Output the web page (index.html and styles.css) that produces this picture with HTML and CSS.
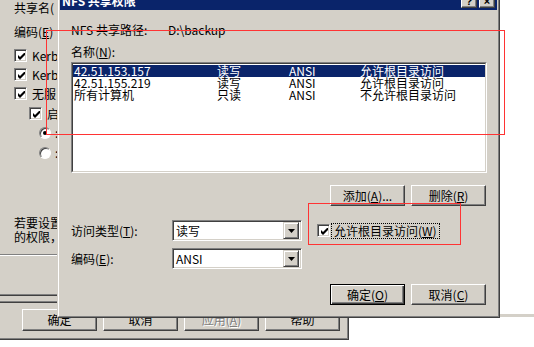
FILE: index.html
```html
<!DOCTYPE html>
<html lang="zh-CN">
<head>
<meta charset="utf-8">
<title>NFS 共享权限</title>
<link rel="stylesheet" href="styles.css">
</head>
<body>
<div class="desk">
  <div class="win back">
    <div class="frame">
      <div class="back-body">
        <div class="b-text">共享名(</div>
        <div class="b-text b-enc">编码(<u>E</u>)</div>
        <div class="b-chk"><span class="chk"><svg viewBox="0 0 7 7" width="7" height="7"><polygon points="0,2 2,4 7,-1 7,2 2,7 0,5" fill="#000"/></svg></span><span>Kerb</span></div>
        <div class="b-chk"><span class="chk"><svg viewBox="0 0 7 7" width="7" height="7"><polygon points="0,2 2,4 7,-1 7,2 2,7 0,5" fill="#000"/></svg></span><span>Kerb</span></div>
        <div class="b-chk"><span class="chk"><svg viewBox="0 0 7 7" width="7" height="7"><polygon points="0,2 2,4 7,-1 7,2 2,7 0,5" fill="#000"/></svg></span><span>无服</span></div>
        <div class="b-chk b-sub"><span class="chk"><svg viewBox="0 0 7 7" width="7" height="7"><polygon points="0,2 2,4 7,-1 7,2 2,7 0,5" fill="#000"/></svg></span><span>启</span></div>
        <div class="b-radio b-r1"><span class="radio on"></span><span>:</span></div>
        <div class="b-radio"><span class="radio"></span><span>:</span></div>
        <div class="b-note">若要设置<br>的权限，</div>
        <div class="b-etch"></div>
        <div class="b-tabline"></div>
        <div class="b-tabline second"></div>
        <div class="b-btns">
          <span class="btn">确定</span>
          <span class="btn">取消</span>
          <span class="btn disabled">应用(<u>A</u>)</span>
          <span class="btn">帮助</span>
        </div>
      </div>
    </div>
  </div>

  <div class="win front">
    <div class="frame">
      <div class="titlebar">
        <span class="title">NFS 共享权限</span>
        <span class="tbtns"><span class="tbtn">?</span><span class="tbtn">×</span></span>
      </div>
      <div class="body">
        <div class="path-row"><span class="path-lbl">NFS 共享路径:</span><span>D:\backup</span></div>
        <div class="name-lbl">名称(<u>N</u>):</div>
        <div class="list">
          <div class="list-in">
            <div class="row sel"><span>42.51.153.157</span><span>读写</span><span>ANSI</span><span>允许根目录访问</span></div>
            <div class="row"><span>42.51.155.219</span><span>读写</span><span>ANSI</span><span>允许根目录访问</span></div>
            <div class="row"><span>所有计算机</span><span>只读</span><span>ANSI</span><span>不允许根目录访问</span></div>
          </div>
        </div>
        <div class="btn-row">
          <span class="btn">添加(<u>A</u>)...</span>
          <span class="btn">删除(<u>R</u>)</span>
        </div>
        <div class="opts">
          <span class="opt-lbl">访问类型(<u>T</u>):</span>
          <span class="combo"><span class="combo-val">读写</span><span class="combo-btn"><svg viewBox="0 0 7 4" width="7" height="4"><polygon points="0,0 7,0 3.5,4" fill="#000"/></svg></span></span>
          <span></span>
          <span class="opt-chk"><span class="chk"><svg viewBox="0 0 7 7" width="7" height="7"><polygon points="0,2 2,4 7,-1 7,2 2,7 0,5" fill="#000"/></svg></span><span class="focus">允许根目录访问(<u>W</u>)</span></span>
          <span class="opt-lbl">编码(<u>E</u>):</span>
          <span class="combo"><span class="combo-val">ANSI</span><span class="combo-btn"><svg viewBox="0 0 7 4" width="7" height="4"><polygon points="0,0 7,0 3.5,4" fill="#000"/></svg></span></span>
        </div>
        <div class="btn-row foot">
          <span class="btn default">确定(<u>O</u>)</span>
          <span class="btn">取消(<u>C</u>)</span>
        </div>
      </div>
    </div>
  </div>

  <div class="anno a1"></div>
  <div class="anno a2"></div>
  <div class="edge"></div>
</div>
</body>
</html>
```

FILE: styles.css
```css
* { box-sizing: border-box; }
html, body { margin: 0; padding: 0; }
body {
  width: 534px;
  height: 347px;
  overflow: hidden;
  background: #fff;
  font-family: "Noto Sans CJK SC", "Liberation Sans", sans-serif;
  font-size: 12px;
  line-height: 12px;
  color: #000;
}
u { text-decoration: underline; text-underline-offset: 1px; }
.desk { position: relative; width: 534px; height: 347px; overflow: hidden; }

.win {
  position: absolute;
  background: #d4d0c8;
  border: 1px solid;
  border-color: #d4d0c8 #404040 #404040 #d4d0c8;
}
.frame {
  height: 100%;
  border: 1px solid;
  border-color: #fff #808080 #808080 #fff;
  padding: 1px;
  display: flex;
  flex-direction: column;
}

/* ---------- back dialog ---------- */
.back { left: -20px; top: -2px; width: 369px; height: 342px; }
.back-body { padding: 1px 0 0 31px; display: flex; flex-direction: column; white-space: nowrap; }
.b-text { height: 12px; }
.b-enc { margin-top: 12px; }
.b-chk { display: flex; align-items: center; gap: 5px; height: 13px; margin-top: 6px; }
.b-enc + .b-chk { margin-top: 11px; }
.b-sub { margin-left: 15px; margin-top: 7px; }
.b-radio { display: flex; align-items: center; gap: 4px; height: 12px; margin-left: 25px; margin-top: 8px; }
.b-r1 { margin-top: 7px; }
.b-note { margin-top: 57px; line-height: 14px; }
.b-etch { margin: 10px 0 0 -31px; height: 2px; border-top: 1px solid #808080; border-bottom: 1px solid #fff; }
.b-tabline { margin: 38px 0 0 -31px; height: 2px; border-top: 1px solid #808080; border-bottom: 1px solid #404040; }
.b-tabline.second { margin-top: 5px; }
.b-btns { display: flex; gap: 6px; margin: 6px 0 0 8px; }
.b-btns .btn { height: 22px; }

/* ---------- controls ---------- */
.chk {
  width: 13px; height: 13px; flex: none;
  border: 1px solid; border-color: #808080 #fff #fff #808080;
  box-shadow: inset 1px 1px #404040, inset -1px -1px #d4d0c8;
  background: #fff;
  display: flex; align-items: center; justify-content: center;
  padding: 1px 0 0 1px;
}
.chk svg { display: block; }
.radio {
  width: 12px; height: 12px; flex: none; border-radius: 50%;
  border: 1px solid; border-color: #808080 #fff #fff #808080;
  box-shadow: inset 1px 1px #404040;
  background: #fff;
  display: flex; align-items: center; justify-content: center;
}
.radio.on::after { content: ""; width: 4px; height: 4px; border-radius: 50%; background: #000; }

.btn {
  width: 75px; height: 21px; flex: none;
  background: #d4d0c8;
  border: 1px solid; border-color: #fff #404040 #404040 #fff;
  box-shadow: inset -1px -1px #808080;
  display: flex; align-items: center; justify-content: center;
  white-space: nowrap;
}
.btn.default {
  border-color: #000;
  box-shadow: inset 1px 1px #fff, inset -1px -1px #404040, inset -2px -2px #808080;
}
.btn.disabled { color: #808080; text-shadow: 1px 1px #fff; }

/* ---------- front dialog ---------- */
.front { left: 57px; top: -11px; width: 443px; height: 329px; }
.titlebar {
  height: 18px; flex: none;
  background: #0a246a; color: #fff; font-weight: bold;
  display: flex; align-items: center; justify-content: space-between;
  padding: 0 2px;
}
.tbtns { display: flex; gap: 2px; }
.tbtn {
  width: 16px; height: 14px;
  background: #d4d0c8; color: #000;
  border: 1px solid; border-color: #fff #404040 #404040 #fff;
  box-shadow: inset -1px -1px #808080;
  display: flex; align-items: center; justify-content: center;
  font-family: "Liberation Sans", sans-serif; font-size: 11px; font-weight: bold;
}
.body { padding: 14px 10px 0 11px; display: flex; flex-direction: column; }
.path-row { display: flex; height: 12px; }
.path-lbl { width: 97px; }
.name-lbl { margin-top: 10px; height: 12px; }
.list {
  margin-top: 4px; height: 111px;
  border: 1px solid; border-color: #808080 #fff #fff #808080;
}
.list-in {
  height: 100%; background: #fff; padding-top: 1px;
  border: 1px solid; border-color: #404040 #d4d0c8 #d4d0c8 #404040;
}
.row {
  display: grid; grid-template-columns: 143px 72px 71px 1fr;
  height: 12px; padding-left: 1px; white-space: nowrap;
}
.row.sel { background: #0a246a; color: #fff; }
.btn-row { display: flex; justify-content: flex-end; gap: 6px; margin-top: 12px; padding-right: 1px; }
.opts {
  margin-top: 14px;
  display: grid; grid-template-columns: 101px 130px 15px auto;
  grid-auto-rows: 21px; row-gap: 7px; align-items: center;
}
.combo {
  height: 21px; display: flex; align-items: center; justify-content: space-between;
  background: #fff;
  border: 1px solid; border-color: #808080 #fff #fff #808080;
  box-shadow: inset 1px 1px #404040, inset -1px -1px #d4d0c8;
  padding: 2px 2px 2px 3px;
}
.combo-btn {
  width: 16px; height: 17px;
  background: #d4d0c8;
  border: 1px solid; border-color: #d4d0c8 #404040 #404040 #d4d0c8;
  box-shadow: inset 1px 1px #fff, inset -1px -1px #808080;
  display: flex; align-items: center; justify-content: center;
}
.combo-btn svg { display: block; }
.opt-chk { display: flex; align-items: center; gap: 3px; white-space: nowrap; }
.focus { outline: 1px dotted #000; outline-offset: 1px; padding: 0 1px; }
.foot { margin-top: 15px; }

/* ---------- overlays ---------- */
.anno { position: absolute; border: 1px solid #f33; }
.a1 { left: 46px; top: 30px; width: 459px; height: 105px; }
.a2 { left: 308px; top: 203px; width: 153px; height: 42px; }
.edge { position: absolute; left: 500px; right: 0; top: 314px; height: 3px; background: #d4d0c8; }
```
